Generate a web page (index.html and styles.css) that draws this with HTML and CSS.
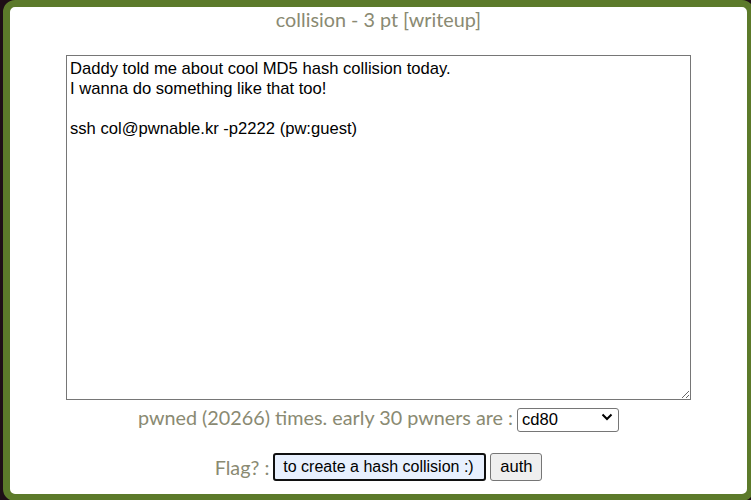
FILE: index.html
```html
<!DOCTYPE html>
<html>
<head>
<meta charset="utf-8">
<link rel="stylesheet" href="styles.css">
</head>
<body>
<div class="frame">
  <div class="title">collision - 3 pt [writeup]</div>
  <div class="desc-wrap">
    <textarea class="desc">Daddy told me about cool MD5 hash collision today.
I wanna do something like that too!

ssh col@pwnable.kr -p2222 (pw:guest)</textarea>
  </div>
  <div class="row pwned">
    <span>pwned (20266) times. early 30 pwners are :</span>
    <span class="sel-wrap">
      <select class="sel"><option>cd80</option></select>
      <svg class="chev" width="12" height="8" viewBox="0 0 12 8"><path d="M1.5 1.5 L6 6 L10.5 1.5" fill="none" stroke="#000" stroke-width="2"/></svg>
    </span>
  </div>
  <div class="row flag">
    <span>Flag? :</span>
    <input class="flag-in" type="text" value="to create a hash collision :)">
    <button class="auth">auth</button>
  </div>
</div>
</body>
</html>
```
FILE: styles.css
```css
html, body {
  margin: 0;
  padding: 0;
  overflow: hidden;
  width: 751px;
  height: 500px;
}
body {
  background: #1e0e16;
}
.frame {
  margin-left: 3px;
  width: 737px;
  height: 487px;
  border: 7px solid #5c7a2a;
  border-radius: 12px;
  background: #fff;
  font-family: Lato, sans-serif;
  color: #8a8a72;
  display: flex;
  flex-direction: column;
  align-items: center;
}
.title {
  font-size: 19.8px;
  line-height: 24px;
  margin-top: 0;
}
.desc-wrap {
  margin-top: 24px;
  width: 625px;
  height: 345px;
}
.desc {
  box-sizing: border-box;
  width: 625px;
  height: 345px;
  margin: 0;
  border: 1px solid #767676;
  padding: 3px 3px;
  font-family: "Liberation Sans", Arial, sans-serif;
  font-size: 16.6px;
  line-height: 20px;
  color: #000;
  resize: both;
  outline: none;
}
.row {
  display: flex;
  align-items: center;
  justify-content: center;
  font-size: 19.8px;
  gap: 4px;
}
.pwned {
  margin-top: 5px;
  height: 24px;
}
.sel-wrap {
  position: relative;
  display: inline-block;
  width: 102px;
  height: 24px;
}
.sel {
  appearance: none;
  -webkit-appearance: none;
  box-sizing: border-box;
  width: 102px;
  height: 24px;
  margin: 0;
  border: 1px solid #767676;
  border-radius: 3px;
  background: #fff;
  padding: 0 4px;
  font-family: "Liberation Sans", Arial, sans-serif;
  font-size: 16.6px;
  color: #000;
}
.chev {
  position: absolute;
  right: 6px;
  top: 8px;
}
.flag {
  margin-top: 24px;
  height: 28px;
}
.flag-in {
  box-sizing: border-box;
  width: 213px;
  height: 28px;
  margin: 0;
  border: 2px solid #101010;
  border-radius: 3px;
  background: #e8f0fe;
  padding: 0 1px 0 8px;
  font-family: "Liberation Sans", Arial, sans-serif;
  font-size: 16px;
  color: #000;
  outline: none;
}
.auth {
  box-sizing: border-box;
  width: 52px;
  height: 28px;
  margin: 0;
  border: 1px solid #767676;
  border-radius: 3px;
  background: #efefef;
  font-family: "Liberation Sans", Arial, sans-serif;
  font-size: 16.6px;
  color: #000;
  padding: 0;
}
```
